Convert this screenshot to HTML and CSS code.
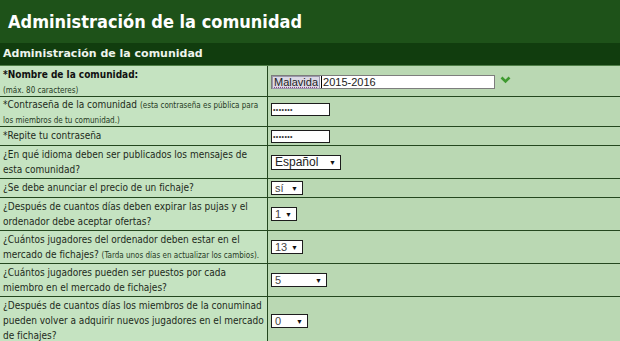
FILE: index.html
```html
<!DOCTYPE html>
<html lang="es">
<head>
<meta charset="utf-8">
<title>Administración de la comunidad</title>
<link rel="stylesheet" href="styles.css">
</head>
<body>
<header class="title-bar"><h1>Administración de la comunidad</h1></header>
<section class="panel">
  <h2 class="panel-head">Administración de la comunidad</h2>
  <div class="row h31">
    <div class="q"><b class="strong">*Nombre de la comunidad:</b><br><span class="note">(máx. 80 caracteres)</span></div>
    <div class="a">
      <div class="text-input wide"><span class="sel">Malavida</span><span class="caret"></span>2015-2016</div>
      <svg class="check" width="11" height="8" viewBox="0 0 11 8"><path d="M1.5 1.5 L5.5 5.5 L9.5 1.5" fill="none" stroke="#3f9a30" stroke-width="2.6"/></svg>
    </div>
  </div>
  <div class="row h30">
    <div class="q tight">*Contraseña de la comunidad <span class="note">(esta contraseña es pública para<br>los miembros de tu comunidad.)</span></div>
    <div class="a top"><div class="text-input pass">&bull;&bull;&bull;&bull;&bull;&bull;&bull;</div></div>
  </div>
  <div class="row h18">
    <div class="q">*Repite tu contraseña</div>
    <div class="a"><div class="text-input pass">&bull;&bull;&bull;&bull;&bull;&bull;&bull;</div></div>
  </div>
  <div class="row h33">
    <div class="q">¿En qué idioma deben ser publicados los mensajes de<br>esta comunidad?</div>
    <div class="a"><div class="select w69"><span>Español</span><span class="arrow">▼</span></div></div>
  </div>
  <div class="row h18">
    <div class="q">¿Se debe anunciar el precio de un fichaje?</div>
    <div class="a"><div class="select w31"><span>sí</span><span class="arrow">▼</span></div></div>
  </div>
  <div class="row h33">
    <div class="q">¿Después de cuantos días deben expirar las pujas y el<br>ordenador debe aceptar ofertas?</div>
    <div class="a"><div class="select w25"><span>1</span><span class="arrow">▼</span></div></div>
  </div>
  <div class="row h33">
    <div class="q">¿Cuántos jugadores del ordenador deben estar en el<br>mercado de fichajes? <span class="note">(Tarda unos días en actualizar los cambios).</span></div>
    <div class="a"><div class="select w31"><span>13</span><span class="arrow">▼</span></div></div>
  </div>
  <div class="row h33">
    <div class="q">¿Cuántos jugadores pueden ser puestos por cada<br>miembro en el mercado de fichajes?</div>
    <div class="a"><div class="select w55"><span>5</span><span class="arrow">▼</span></div></div>
  </div>
  <div class="row h48">
    <div class="q">¿Después de cuantos días los miembros de la conuminad<br>pueden volver a adquirir nuevos jugadores en el mercado<br>de fichajes?</div>
    <div class="a"><div class="select w36"><span>0</span><span class="arrow">▼</span></div></div>
  </div>
</section>
</body>
</html>
```
FILE: styles.css
```css
html, body { margin: 0; padding: 0; }
body {
  width: 620px;
  height: 341px;
  overflow: hidden;
  background: #bad8b3;
  font-family: "DejaVu Sans Condensed", "DejaVu Sans", Verdana, sans-serif;
}
.title-bar {
  background: #1e5219;
  height: 43px;
  display: flex;
  align-items: center;
  padding-left: 8px;
}
.title-bar h1 {
  margin: 0;
  color: #ffffff;
  font-family: "DejaVu Sans Condensed", "DejaVu Sans", Verdana, sans-serif;
  font-weight: bold;
  font-size: 18px;
  margin-top: -1px;
}
.panel { width: 640px; }
.panel-head {
  margin: 0;
  background: #113d0e;
  color: #eef4ec;
  font-family: "DejaVu Sans", Verdana, sans-serif;
  font-size: 11px;
  font-weight: bold;
  height: 22px;
  line-height: 22px;
  padding-left: 3px;
  border-bottom: 1px solid #4f7f47;
}
.row {
  display: grid;
  grid-template-columns: 268px 1fr;
  border-bottom: 1px solid #24471f;
}
.h18 { height: 18px; }
.h30 { height: 29px; }
.h31 { height: 30px; }
.h33 { height: 32px; }
.h48 { height: 48px; }
.q {
  background: #c5e3c1;
  border-right: 1px solid #24471f;
  padding: 1px 3px 0;
  font-size: 10px;
  line-height: 15px;
  color: #1d2a1b;
  overflow: hidden;
  white-space: nowrap;
}
.q.tight { line-height: 14px; }
.q .strong { font-weight: bold; color: #111; }
.note { font-size: 8px; color: #263a24; }
.a {
  display: flex;
  align-items: center;
  padding-left: 3px;
}
.a.top { align-items: flex-start; padding-top: 6px; }
.text-input {
  background: #fff;
  border: 1px solid #1c1c1c;
  height: 11px;
  font-family: "Liberation Sans", Arial, sans-serif;
  font-size: 11px;
  line-height: 11px;
  color: #222;
  display: flex;
  align-items: center;
}
.text-input.wide {
  width: 222px;
  height: 12px;
  border-color: #7d7d7d;
  margin-top: 2px;
}
.sel {
  background: #dcd9e6;
  border: 1px solid #9a97ab;
  height: 11px;
  line-height: 11px;
  padding: 0 1px;
  text-decoration: underline dotted #8a4a8a;
}
.caret { width: 1px; height: 12px; background: #000; margin: 0 1px; }
.check { margin-left: 5px; margin-top: -3px; }
.text-input.pass {
  width: 56px;
  font-size: 7px;
  letter-spacing: 0.4px;
  padding-left: 1px;
  color: #333;
}
.select {
  background: #fff;
  border: 1px solid #1d1d1d;
  box-sizing: border-box;
  height: 14px;
  display: flex;
  align-items: center;
  justify-content: space-between;
  padding: 0 4px 0 3px;
  font-family: "Liberation Sans", Arial, sans-serif;
  font-size: 11px;
  color: #444;
}
.select .arrow { font-size: 7px; color: #111; }
.w69 { width: 70px; height: 15px; font-size: 12px; color: #222; }
.w31 { width: 32px; }
.w25 { width: 26px; }
.w55 { width: 56px; }
.w36 { width: 37px; }
```
